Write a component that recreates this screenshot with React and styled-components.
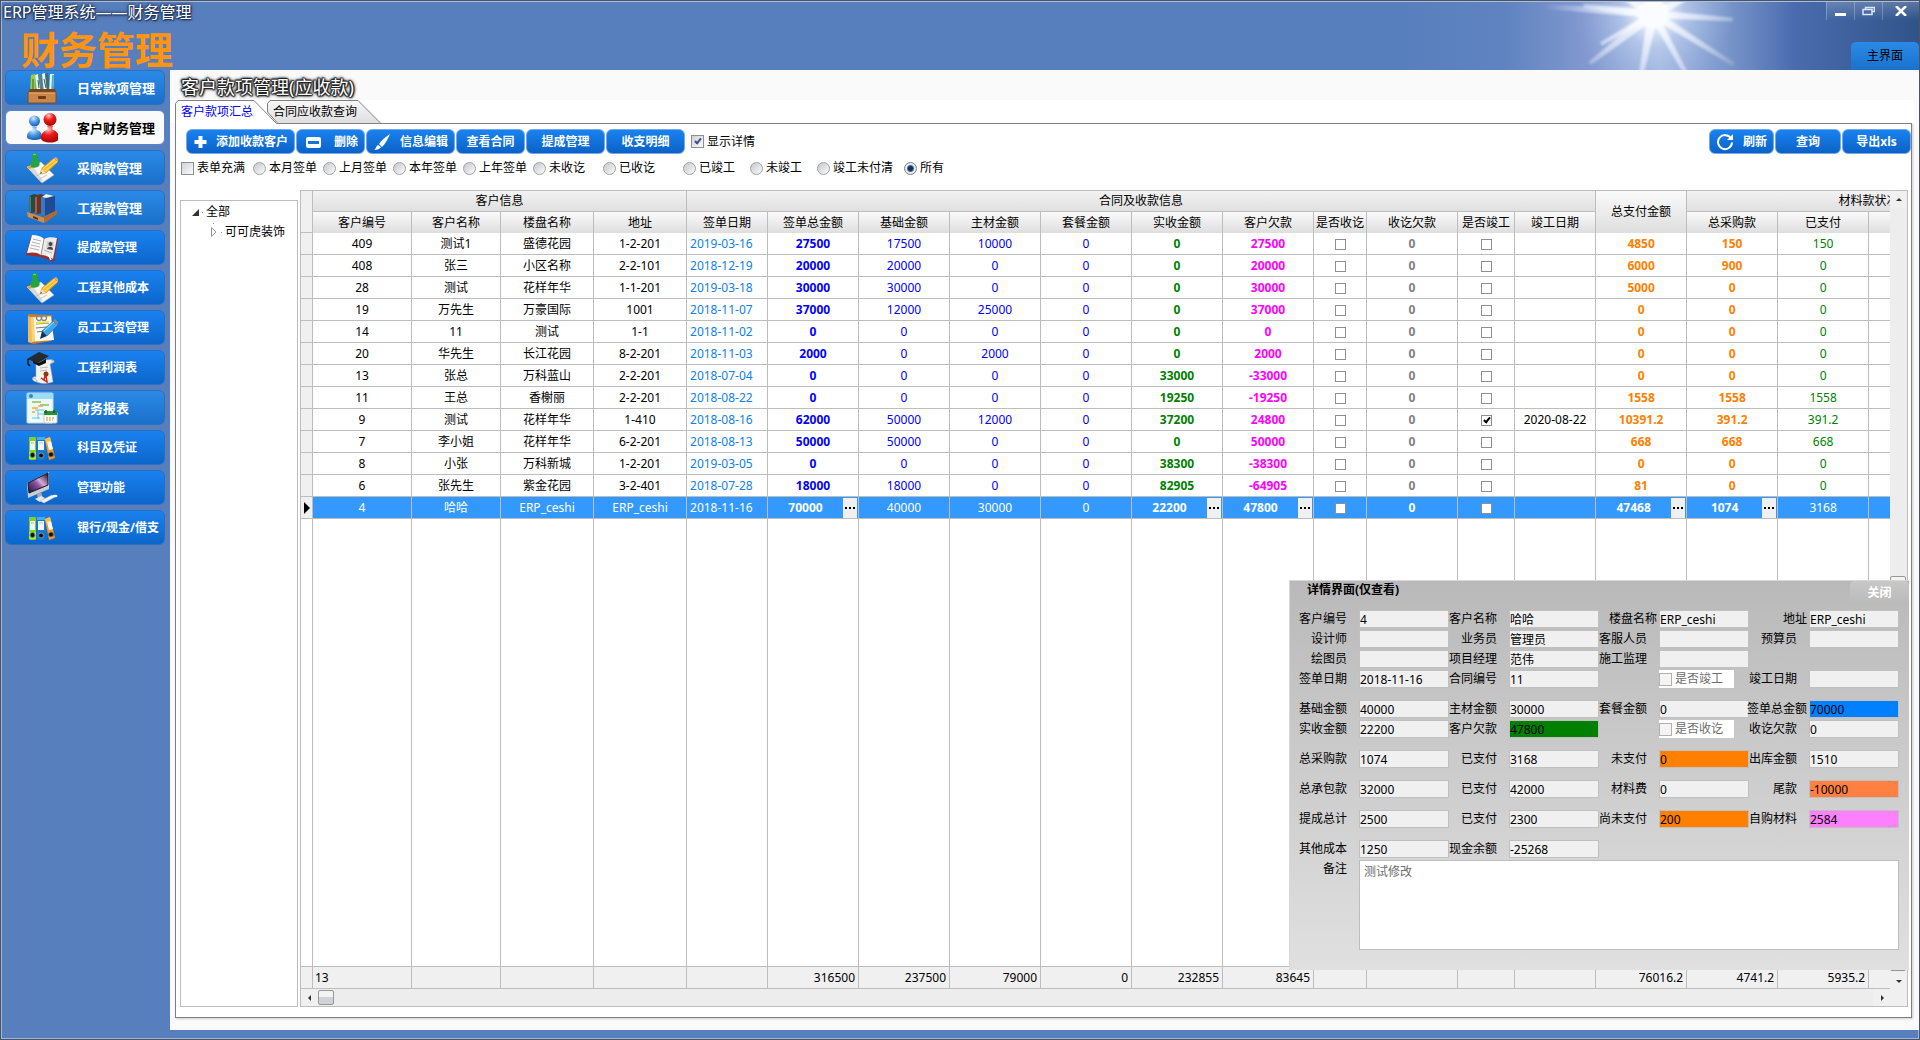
import React, { useState } from "react";
import styled, { createGlobalStyle, css } from "styled-components";

const FONT = `"Noto Sans", "Noto Sans CJK SC", sans-serif`;

const GlobalStyle = createGlobalStyle`
  *, *::before, *::after {
    box-sizing: border-box;
  }

  body {
    margin: 0;
    background: #587fbd;
    color: #000;
    font-family: ${FONT};
    font-size: 12px;
    line-height: 16px;
  }

  button, input, textarea {
    margin: 0;
    padding: 0;
    font: inherit;
    color: inherit;
  }
`;

/* ---------- window ---------- */

const Window = styled.div`
  display: flex;
  flex-direction: column;
  height: 100vh;
  min-height: 800px;
  padding-bottom: 9px;
  border: 1px solid #4c5361;
  background: #587fbd;
  box-shadow: inset 0 0 0 1px #9db5dc;
  overflow: hidden;
`;

const Header = styled.header`
  position: relative;
  display: flex;
  flex: none;
  justify-content: space-between;
  height: 69px;
  border-top: 1px solid #a9bfe2;
`;

const Sky = styled.svg`
  position: absolute;
  top: 0;
  right: 0;
  width: 518px;
  height: 68px;
`;

const Brand = styled.div`
  position: relative;
`;

const AppName = styled.div`
  padding-left: 2px;
  color: #fff;
  font-size: 16px;
  line-height: 20px;
  white-space: nowrap;
  text-shadow: 1px 1px 1px #1c2f52, -1px 0 1px #2b4270, 0 0 3px #1c2f52, 0 0 4px #1c2f52;
`;

const ModuleName = styled.h1`
  margin: 4px 0 0;
  padding-left: 20px;
  color: #ff9412;
  font-size: 38px;
  line-height: 46px;
  white-space: nowrap;
`;

const HeaderRight = styled.div`
  position: relative;
  display: flex;
  flex-direction: column;
  align-items: flex-end;
  justify-content: space-between;
`;

const WindowButtons = styled.div`
  display: flex;
`;

const WindowButton = styled.button`
  display: flex;
  align-items: center;
  justify-content: center;
  width: ${p => p.$width || 28}px;
  height: 18px;
  border: 0;
  border-left: 1px solid rgba(255, 255, 255, 0.25);
  background: linear-gradient(rgba(255, 255, 255, 0.2), rgba(255, 255, 255, 0));
  color: #fff;
`;

const HomeButton = styled.button`
  width: 68px;
  height: 28px;
  border: 0;
  border-radius: 5px 5px 0 0;
  background: linear-gradient(#2b8ae6, #1972cc);
  color: #000;
`;

const Body = styled.div`
  display: flex;
  flex: 1;
  min-height: 0;
`;

/* ---------- sidebar ---------- */

const Sidebar = styled.nav`
  display: flex;
  flex: none;
  flex-direction: column;
  gap: 5px;
  width: 169px;
  padding: 0 5px 0 4px;
`;

const SideButton = styled.button`
  display: flex;
  align-items: center;
  gap: 19px;
  height: 35px;
  padding-left: 20px;
  border: 1px solid #2f6dbd;
  border-radius: 6px;
  background: ${p => (p.$light ? "linear-gradient(#2b8ae8, #1970ca)" : "linear-gradient(#1982f0, #0b66ca)")};
  color: #fff;
  font-size: ${p => (p.$light ? 13 : 12)}px;
  font-weight: bold;
  white-space: nowrap;

  ${p =>
    p.$active &&
    css`
      border-color: #4f86cf;
      background: #fafafa;
      color: #000;
    `}

  svg {
    flex: none;
    width: 32px;
    height: 32px;
  }
`;

/* ---------- content ---------- */

const Content = styled.main`
  display: flex;
  flex: 1;
  flex-direction: column;
  min-width: 0;
  padding-bottom: 12px;
  background: #fafafa;
`;

const PageTitle = styled.h2`
  flex: none;
  margin: 0;
  padding: 4px 0 0 11px;
  height: 30px;
  color: #fff;
  font-size: 18px;
  font-weight: normal;
  line-height: 26px;
  text-shadow: 1px 0 1px #222, -1px 0 1px #222, 0 1px 1px #222, 0 -1px 1px #222, 1px 1px 2px #222,
    -1px -1px 2px #222, 0 0 3px #222, 0 0 4px #333;
`;

const TabStrip = styled.div`
  display: flex;
  flex: none;
  height: 23px;
  margin-right: 5px;
  padding-left: 5px;
  background: #fff;
`;

const Tab = styled.button`
  position: relative;
  z-index: ${p => (p.$active ? 2 : 1)};
  width: ${p => p.$width}px;
  height: 24px;
  margin-right: -10px;
  padding-left: 6px;
  border: 0;
  background: none;
  color: ${p => (p.$active ? "#0000ff" : "#000")};
  text-align: left;

  svg {
    position: absolute;
    inset: 0;
    z-index: -1;
  }
`;

const Pane = styled.section`
  display: flex;
  flex: 1;
  flex-direction: column;
  min-height: 0;
  margin: 0 7px 0 5px;
  padding-top: 5px;
  border: 1px solid #808080;
  background: #fff;
  box-shadow: 1px 1px 2px #ccc;
`;

const Toolbar = styled.div`
  display: flex;
  flex: none;
  align-items: center;
  justify-content: space-between;
  padding-left: 10px;
`;

const ToolGroup = styled.div`
  display: flex;
  align-items: center;
  gap: 1px;
`;

const ToolButton = styled.button`
  display: flex;
  align-items: center;
  justify-content: ${p => (p.$icon ? "space-between" : "center")};
  width: ${p => p.$width}px;
  height: 25px;
  padding: ${p => (p.$icon ? "0 6px" : "0")};
  border: 1px solid #73a9ea;
  border-radius: 6px;
  background: linear-gradient(#1982f0, #0b62c6);
  color: #fff;
  font-weight: bold;
  white-space: nowrap;
`;

const Check = styled.input.attrs({ type: "checkbox" })`
  appearance: none;
  position: relative;
  flex: none;
  width: ${p => (p.$small ? 11 : 13)}px;
  height: ${p => (p.$small ? 11 : 13)}px;
  border: 1px solid #8e8f8f;
  background: ${p => (p.$small ? "#fff" : "linear-gradient(135deg, #cfd2d6, #fbfbfb)")};
  vertical-align: middle;

  &:disabled {
    border-color: #b1b1b1;
    background: #f4f4f4;
  }

  &:checked::after {
    content: "";
    position: absolute;
    top: ${p => (p.$small ? 0 : 1)}px;
    left: ${p => (p.$small ? 3 : 4)}px;
    width: 4px;
    height: 7px;
    border: solid ${p => (p.$small ? "#000" : "#3b4f90")};
    border-width: 0 2px 2px 0;
    transform: rotate(40deg);
  }
`;

const Radio = styled.input.attrs({ type: "radio" })`
  appearance: none;
  flex: none;
  width: 13px;
  height: 13px;
  border: 1px solid #a0a1a1;
  border-radius: 50%;
  background: linear-gradient(135deg, #c4c7cb, #fbfbfb);

  &:checked {
    border-color: #7d8084;
    background: radial-gradient(circle, #14305c 0 2px, #3f6aa0 3px, #e8eaec 4px);
  }
`;

const Option = styled.label`
  display: flex;
  align-items: center;
  gap: 3px;
  width: ${p => (p.$width ? p.$width + "px" : "auto")};
  white-space: nowrap;
`;

const DetailToggle = styled(Option)`
  padding-left: 5px;
`;

const Filters = styled.div`
  display: flex;
  flex: none;
  align-items: center;
  height: 28px;
  padding-left: 5px;
`;

const Workspace = styled.div`
  display: flex;
  flex: 1;
  gap: 2px;
  min-height: 0;
  padding: 8px 3px 10px 4px;
`;

/* ---------- tree ---------- */

const Tree = styled.ul`
  flex: none;
  width: 118px;
  margin: 10px 0 0;
  padding: 1px 0 0;
  border: 1px solid #bdbdbd;
  list-style: none;
`;

const TreeItem = styled.li`
  display: flex;
  align-items: center;
  gap: 3px;
  height: 20px;
  padding-left: ${p => (p.$level ? 30 : 11)}px;

  svg {
    flex: none;
  }
`;

/* ---------- grid ---------- */

const GridFrame = styled.div`
  position: relative;
  display: grid;
  flex: 1;
  grid-template-columns: minmax(0, 1fr) 17px;
  grid-template-rows: minmax(0, 1fr) 17px;
  min-width: 0;
  border: 1px solid #bdbdbd;
`;

const GridView = styled.div`
  min-height: 0;
  overflow: hidden;
`;

const Table = styled.table`
  width: 1648px;
  height: 100%;
  border-spacing: 0;
  table-layout: fixed;
`;

const Th = styled.th`
  height: 21px;
  padding: 0;
  border-right: 1px solid #bdbdbd;
  border-bottom: ${p => (p.$group ? "1px solid #bdbdbd" : "0")};
  background: ${p => (p.$group ? "linear-gradient(#f2f2f2, #e0e0e0)" : "linear-gradient(#fafafa, #dedede)")};
  font-weight: normal;
  white-space: nowrap;
`;

const MaterialTitle = styled.span`
  padding-left: 91px;
`;

const Td = styled.td`
  height: 22px;
  padding: ${p => (p.$align === "left" ? "0 0 0 3px" : "0")};
  border-right: 1px solid #bdbdbd;
  border-bottom: 1px solid #bdbdbd;
  color: ${p => (p.$selected ? "#fff" : p.$color || "#000")};
  background: ${p => (p.$selected ? "#3399ff" : "#fff")};
  font-weight: ${p => (p.$bold ? "bold" : "normal")};
  line-height: 16px;
  text-align: ${p => p.$align || "center"};
  white-space: nowrap;
`;

const Marker = styled.td`
  height: ${p => (p.$head ? 42 : 22)}px;
  padding: 0 0 0 2px;
  border-right: 1px solid #bdbdbd;
  border-bottom: 1px solid #bdbdbd;
  background: #f0f0f0;
  line-height: 0;
`;

const FillerCell = styled.td`
  padding: 0;
  border-right: 1px solid #bdbdbd;
  border-bottom: 1px solid #bdbdbd;
`;

const SumCell = styled.td`
  height: 22px;
  padding: 0 3px 0 2px;
  border-right: 1px solid #bdbdbd;
  border-bottom: 1px solid #bdbdbd;
  background: #f0f0f0;
  text-align: ${p => (p.$left ? "left" : "right")};
`;

const WithMore = styled.div`
  display: flex;
  align-items: center;

  span {
    flex: 1;
  }
`;

const MoreButton = styled.button`
  display: flex;
  align-items: center;
  justify-content: center;
  width: 14px;
  height: 20px;
  margin-right: 1px;
  border: 0;
  background: #f0f0f0;
`;

const VScroll = styled.div`
  display: flex;
  flex-direction: column;
  background: #ededed;
`;

const HScroll = styled.div`
  display: flex;
  background: #ededed;
`;

const ScrollArrow = styled.button`
  display: flex;
  flex: none;
  align-items: center;
  justify-content: center;
  width: 17px;
  height: 17px;
  border: 0;
  background: #f0f0f0;
`;

const Gap = styled.div`
  flex: ${p => p.$grow};
`;

const Thumb = styled.div`
  flex: ${p => p.$grow || "none"};
  width: 16px;
  min-height: 15px;
  margin: 1px 0;
  border: 1px solid #979797;
  border-radius: 2px;
  background: linear-gradient(#f4f4f4 50%, #d0d2d4 50%);
`;

const Corner = styled.div`
  background: #f0f0f0;
`;

/* ---------- detail panel ---------- */

const Detail = styled.aside`
  position: absolute;
  right: -2px;
  bottom: 36px;
  width: 620px;
  height: 390px;
  border-top: 1px solid #d8d8d8;
  border-left: 1px solid #d8d8d8;
  background: linear-gradient(#b9b9b9, #e0e0e0);
`;

const DetailHead = styled.div`
  display: flex;
  justify-content: space-between;
  height: 29px;
  padding-left: 17px;
  font-weight: bold;
  line-height: 18px;
`;

const CloseButton = styled.button`
  width: 59px;
  height: 24px;
  border: 0;
  border-radius: 5px;
  background: linear-gradient(#c8c8c8, #bababa);
  color: #fff;
  font-weight: bold;
`;

const FieldGroup = styled.div`
  margin-bottom: ${p => (p.$last ? 0 : 10)}px;
  padding-left: 9px;
`;

const FieldRow = styled.div`
  display: grid;
  grid-template-columns: repeat(4, 60px 90px);
  height: 20px;
`;

const FieldLabel = styled.label`
  display: flex;
  justify-content: flex-end;
  padding-right: ${p => (p.$tight ? 2 : 12)}px;
  line-height: 18px;
  white-space: nowrap;
`;

const FieldInput = styled.input`
  width: 90px;
  height: 18px;
  padding: 0;
  border: 1px solid #c0c0c0;
  background: ${p => p.$fill || "#f0f0f0"};
`;

const FieldCheck = styled.label`
  display: flex;
  grid-column: span 2;
  align-items: center;
  gap: 3px;
  width: 75px;
  height: 18px;
  margin-left: 60px;
  background: #fff;
  color: #6d6d6d;
`;

const MemoRow = styled.div`
  display: grid;
  grid-template-columns: 60px 540px;
  padding-left: 9px;
`;

const Memo = styled.textarea`
  height: 90px;
  padding: 3px 4px;
  border: 1px solid #bdbdbd;
  background: #fff;
  color: #6d6d6d;
  resize: none;
`;

/* ---------- sidebar icons ---------- */

const FilesIcon = () => (
  <svg viewBox="0 0 32 32">
    <path d="M5 3l4-1 1 19H4z" fill="#9fd12e" />
    <path d="M9 3l3-1 3 19h-4z" fill="#e9f3f2" />
    <path d="M12 3l3-1 4 19h-4z" fill="#4f8784" />
    <path d="M16 2l3-1 3 20h-4z" fill="#f1f5f5" />
    <path d="M19 2l3-1 3 20h-4z" fill="#376e78" />
    <path d="M24 2h4l-1 19h-4z" fill="#eaf6f8" />
    <path d="M26 3h2l-1 18h-2z" fill="#49b5c8" />
    <path d="M7 7v10M12 8l1 8M18 7l2 9" stroke="#3d5556" strokeWidth="1" />
    <path d="M4 17h25l1 4H2z" fill="#7a4216" />
    <rect x="2" y="20" width="28" height="11" rx="1" fill="#c9874c" stroke="#824b1e" />
    <rect x="12" y="24" width="8" height="3" rx="1" fill="#70390f" />
    <path d="M3 21h26" stroke="#e9b47f" />
  </svg>
);

const UsersIcon = () => (
  <svg viewBox="0 0 32 32">
    <defs>
      <radialGradient id="ublue" cx="0.4" cy="0.25" r="0.8">
        <stop offset="0" stopColor="#d8ecff" />
        <stop offset="0.5" stopColor="#4b98e8" />
        <stop offset="1" stopColor="#1557ac" />
      </radialGradient>
      <radialGradient id="ured" cx="0.4" cy="0.2" r="0.8">
        <stop offset="0" stopColor="#ffc8c0" />
        <stop offset="0.45" stopColor="#ee1c1c" />
        <stop offset="1" stopColor="#a80505" />
      </radialGradient>
    </defs>
    <path d="M1 25c0-4 2-6 5-7 1-1 1-2 0-3h5c-1 1-1 2 0 3 3 1 5 3 5 7 0 4-15 4-15 0z" fill="url(#ublue)" />
    <circle cx="8.500" cy="9" r="5.500" fill="url(#ublue)" />
    <path d="M15 26c0-5 3-7 6-8 1-1 1-3 0-4h6c-1 1-1 3 0 4 3 1 6 3 6 8 0 6-18 6-18 0z" fill="url(#ured)" />
    <circle cx="24" cy="7.500" r="6.500" fill="url(#ured)" />
  </svg>
);

const NotesIcon = () => (
  <svg viewBox="0 0 32 32">
    <path d="M1 15l14-5 13 13-12 8z" fill="#f6f6f4" stroke="#b5b5b0" strokeWidth="0.6" />
    <path d="M1 15l5-2 11 16-2 1z" fill="#d9dad4" />
    <path d="M1 15l11-4 2 2-11 4z" fill="#f1a01e" />
    <path d="M5 15c-1-4 0-6 2-7-2-3-1-7 2-7s4 4 2 7c3 1 3 3 2 6-2 2-6 2-8 1z" fill="#25a53d" />
    <path d="M7 3c1-1 2-1 3 0" stroke="#8ae080" fill="none" />
    <path d="M14 22l2-6L28 6l4 4-12 11z" fill="#fbbd21" stroke="#c37a08" strokeWidth="0.5" />
    <path d="M17 17L29 7M19 19L31 9" stroke="#ffe58a" />
    <path d="M28 6l2-1 3 3-1 2z" fill="#e8a08c" />
    <path d="M14 22l2-5 4 4z" fill="#f7dfb4" />
    <path d="M14 22l1-2 1 1z" fill="#222" />
    <path d="M9 25l5-3M12 28l9-5" stroke="#aaa" strokeWidth="0.6" />
  </svg>
);

const BooksIcon = () => (
  <svg viewBox="0 0 32 32">
    <path d="M3 4l5-2 4 1v16l-8 3z" fill="#28493f" />
    <path d="M3 4l2 1v15l-1 1z" fill="#4e7d68" />
    <path d="M9 4l5-2 4 1v18l-8 1z" fill="#6b3128" />
    <path d="M9 5h2v16H9z" fill="#a2604a" />
    <path d="M16 5l4-3 9 2v18l-10 4z" fill="#1d4b95" />
    <path d="M15 5l4 1v18l-4-2z" fill="#3b78c2" />
    <path d="M20 2l8 2-8 2-4-1z" fill="#f3f0e4" />
    <path d="M1 20l16 5 14-7v4L19 31 2 25z" fill="#ad6a37" />
    <path d="M1 20l17 6v5L2 25z" fill="#cd8d55" />
    <path d="M7 24l5 2v2l-5-2z" fill="#5a2c0c" />
  </svg>
);

const AddressIcon = () => (
  <svg viewBox="0 0 32 32">
    <path d="M0 23L5 4l13 4 14-2-4 24-13-5z" fill="#a22b2a" />
    <path d="M1 21L6 3c5 0 9 1 12 4l-3 16C11 20 6 20 1 21z" fill="#fbfbfa" />
    <path d="M18 7c4-2 8-2 13-1l-4 21c-4-2-8-4-12-4z" fill="#ececea" />
    <path d="M18 7l-3 16" stroke="#999" />
    <path d="M7 7l8 2M6 10l8 2M5 13l9 2M4 16l9 2M18 18l8 3" stroke="#9d9d9d" strokeWidth="0.8" />
    <path d="M21 9l7 1-1 8-7-1z" fill="#cfd2d6" />
    <circle cx="24.500" cy="12" r="2" fill="#444" />
    <path d="M21 17c1-3 6-3 6 1z" fill="#444" />
    <path d="M22 22l3 6" stroke="#fff" strokeWidth="1.500" />
  </svg>
);

const ClipboardIcon = () => (
  <svg viewBox="0 0 32 32">
    <path d="M2 2l24 1v26L7 32l-5-2z" fill="#c9792d" />
    <path d="M2 4l4 2v25l-4-1z" fill="#f5b95e" />
    <path d="M5 5l20-1 1 24-20 2z" fill="#f7d66b" />
    <path d="M8 6l17-1 3 23-19 1z" fill="#fafaf8" />
    <circle cx="13" cy="6" r="2.500" fill="none" stroke="#858585" strokeWidth="1.300" />
    <circle cx="18" cy="6" r="2.500" fill="none" stroke="#858585" strokeWidth="1.300" />
    <path d="M10 12l13-1M10 16l11-1M11 20l8-1" stroke="#777" />
    <path d="M10 11l13-1" stroke="#efe43a" strokeWidth="2" />
    <path d="M16 19L27 9l5 4-11 11z" fill="#3da7ed" stroke="#1e5f9b" strokeWidth="0.500" />
    <path d="M27 9l2-2 4 4-1 2z" fill="#868b91" />
    <path d="M14 27l2-8 5 5z" fill="#15354f" />
    <path d="M18 19l10-9" stroke="#a9e0ff" />
  </svg>
);

const DiplomaIcon = () => (
  <svg viewBox="0 0 32 32">
    <path d="M10 12c5-4 13-5 17-4 2 1 1 3-1 3l-2 1 3 18c-7 2-13 2-19-1-3-2-1-5 2-4z" fill="#f2f2ef" stroke="#b5b5b2" strokeWidth="0.500" />
    <path d="M25 8c3 0 3 3 0 3M6 27c2-1 5 0 5 3" stroke="#aaa" fill="none" />
    <path d="M7 8l5 3 8-4v4l-7 3-6-3z" fill="#111" />
    <path d="M1 7L13 0l10 4-11 7z" fill="#26292d" />
    <path d="M2 7v5l2 2" stroke="#15181b" fill="none" strokeWidth="1.500" />
    <path d="M14 16l8-1M14 19l7-1" stroke="#bbb" />
    <circle cx="20" cy="22" r="2.500" fill="#8f3b12" />
    <path d="M19 24l-1 4-3-2M20 24l1 6-3-2" stroke="#cf2018" strokeWidth="1.500" fill="none" />
  </svg>
);

const ReportIcon = () => (
  <svg viewBox="0 0 32 32">
    <rect x="1" y="1" width="26" height="30" rx="1" fill="#eef9f7" stroke="#c3dbe0" />
    <rect x="1" y="1" width="26" height="6" fill="#9cdcf5" />
    <circle cx="5" cy="4" r="2" fill="#2f8db0" />
    <path d="M6 10h9M14 13h9" stroke="#8fbd59" strokeWidth="1.500" />
    <path d="M6 16h6M12 14h5M6 20h3" stroke="#f5aa35" strokeWidth="1.500" />
    <path d="M9 18h9M12 22h6M6 26h8M12 18v9" stroke="#62c7e5" />
    <rect x="18" y="20" width="13" height="11" rx="1" fill="#fff" stroke="#c5cbc2" />
    <rect x="18" y="19" width="13" height="4" fill="#259234" />
    <path d="M20 18v3M28 18v3" stroke="#12581d" strokeWidth="1.500" />
    <path d="M20 26h8M20 28h7" stroke="#d7b66b" strokeWidth="1.300" strokeDasharray="2 1" />
  </svg>
);

const BindersIcon = () => (
  <svg viewBox="0 0 32 32">
    <rect x="3" y="5" width="7" height="23" rx="1" fill="#7ed321" />
    <path d="M3 20h7v7H3z" fill="#a7ea48" />
    <rect x="11" y="5" width="8" height="23" rx="1" fill="#1878cd" />
    <path d="M11 5h8v3h-8z" fill="#49a9ee" />
    <path d="M19 7l5-2 5 21-6 2z" fill="#ff981a" />
    <path d="M19 7l5-2 1 4-5 2z" fill="#ffc33f" />
    <path d="M4 9h5v9H4zM12 9h6v9h-6zM21 10l4-1 2 8-4 1z" fill="#f5f8fa" />
    <path d="M5 11h3M13 11h4" stroke="#aac2d0" />
    <circle cx="6.500" cy="23" r="2.500" fill="#111" stroke="#6d8c70" />
    <circle cx="15" cy="23.500" r="2.500" fill="#111" stroke="#7990a9" />
    <circle cx="25" cy="22.500" r="2.500" fill="#111" stroke="#9d7446" />
  </svg>
);

const MonitorIcon = () => (
  <svg viewBox="0 0 32 32">
    <defs>
      <linearGradient id="screen" x1="0" y1="1" x2="1" y2="0">
        <stop offset="0" stopColor="#17102e" />
        <stop offset="0.45" stopColor="#8956a8" />
        <stop offset="0.6" stopColor="#d7abd4" />
        <stop offset="1" stopColor="#170b2b" />
      </linearGradient>
    </defs>
    <path d="M1 11L23 0v17L2 26z" fill="#c9ccd0" />
    <path d="M2 11L22 1v12L3 21z" fill="url(#screen)" stroke="#15151b" />
    <path d="M11 22l4-2 2 6-5 2z" fill="#a5a9af" />
    <path d="M9 27l6-3 4 2-5 4z" fill="#e4e6e8" />
    <path d="M14 29l12-6 3 2-11 6z" fill="#f2f3f4" stroke="#b3b6ba" strokeWidth="0.500" />
    <ellipse cx="29" cy="24" rx="2.500" ry="1.300" fill="#f2f3f4" />
  </svg>
);

/* ---------- toolbar and window glyphs ---------- */

const PlusIcon = () => (
  <svg width="14" height="14" viewBox="0 0 14 14">
    <path d="M5.500 1h4v4h4v4h-4v4h-4V9h-4V5h4z" fill="#fff" />
  </svg>
);

const MinusIcon = () => (
  <svg width="20" height="14" viewBox="0 0 20 14">
    <rect x="3" y="2" width="15" height="11" rx="2" fill="#fff" />
    <path d="M5 7.500h11" stroke="#1673dc" strokeWidth="3" />
  </svg>
);

const BrushIcon = () => (
  <svg width="18" height="18" viewBox="0 0 18 18">
    <path d="M17 1C12 4 8 8 6 11l3 3c3-3 6-8 8-13z" fill="#fff" />
    <path d="M5 12l3 2c-1 2-4 3-7 3 2-1 2-4 4-5z" fill="#fff" />
  </svg>
);

const RefreshIcon = () => (
  <svg width="18" height="18" viewBox="0 0 18 18">
    <path d="M15 5.500A7 7 0 1 0 16 9.500" fill="none" stroke="#fff" strokeWidth="2" />
    <path d="M17 1v6h-6z" fill="#fff" />
  </svg>
);

const Arrow = ({ dir }) => {
  const points = { up: "1,5 4,2 7,5", down: "1,3 4,6 7,3", left: "5,1 2,4 5,7", right: "3,1 6,4 3,7" };
  return (
    <svg width="8" height="8" viewBox="0 0 8 8">
      <polygon points={points[dir]} fill="#333" />
    </svg>
  );
};

/* ---------- data ---------- */

const MENU = [
  { text: "日常款项管理", icon: FilesIcon, light: true },
  { text: "客户财务管理", icon: UsersIcon, light: true },
  { text: "采购款管理", icon: NotesIcon, light: true },
  { text: "工程款管理", icon: BooksIcon, light: true },
  { text: "提成款管理", icon: AddressIcon },
  { text: "工程其他成本", icon: NotesIcon },
  { text: "员工工资管理", icon: ClipboardIcon },
  { text: "工程利润表", icon: DiplomaIcon },
  { text: "财务报表", icon: ReportIcon, light: true },
  { text: "科目及凭证", icon: BindersIcon },
  { text: "管理功能", icon: MonitorIcon },
  { text: "银行/现金/借支", icon: BindersIcon }
];

const TOOLS = [
  { text: "添加收款客户", icon: PlusIcon, width: 109 },
  { text: "删除", icon: MinusIcon, width: 69 },
  { text: "信息编辑", icon: BrushIcon, width: 89 },
  { text: "查看合同", width: 69 },
  { text: "提成管理", width: 79 },
  { text: "收支明细", width: 79 }
];

const RANGES = [
  { text: "本月签单", width: 70 },
  { text: "上月签单", width: 70 },
  { text: "本年签单", width: 70 },
  { text: "上年签单", width: 70 },
  { text: "未收讫", width: 70 },
  { text: "已收讫", width: 80 },
  { text: "已竣工", width: 67 },
  { text: "未竣工", width: 67 },
  { text: "竣工未付清", width: 87 },
  { text: "所有" }
];

const BLUE = "#0000ff";
const GREEN = "#008000";
const ORANGE = "#ff8000";

const COLUMNS = [
  { title: "客户编号", width: 99, sum: "13" },
  { title: "客户名称", width: 89 },
  { title: "楼盘名称", width: 93 },
  { title: "地址", width: 93 },
  { title: "签单日期", width: 81, color: "#1080ee", align: "left" },
  { title: "签单总金额", width: 91, color: BLUE, bold: true, more: true, sum: "316500" },
  { title: "基础金额", width: 91, color: BLUE, sum: "237500" },
  { title: "主材金额", width: 91, color: BLUE, sum: "79000" },
  { title: "套餐金额", width: 91, color: BLUE, sum: "0" },
  { title: "实收金额", width: 91, color: GREEN, bold: true, more: true, sum: "232855" },
  { title: "客户欠款", width: 91, color: "#ff00ff", bold: true, more: true, sum: "83645" },
  { title: "是否收讫", width: 53, check: true },
  { title: "收讫欠款", width: 91, color: "#808080", bold: true },
  { title: "是否竣工", width: 57, check: true },
  { title: "竣工日期", width: 81 },
  { title: "总支付金额", width: 91, color: ORANGE, bold: true, more: true, sum: "76016.2" },
  { title: "总采购款", width: 91, color: ORANGE, bold: true, more: true, sum: "4741.2" },
  { title: "已支付", width: 91, color: GREEN, sum: "5935.2" },
  { title: "", width: 91 }
];

const ROWS = [
  ["409", "测试1", "盛德花园", "1-2-201", "2019-03-16", "27500", "17500", "10000", "0", "0", "27500", false, "0", false, "", "4850", "150", "150"],
  ["408", "张三", "小区名称", "2-2-101", "2018-12-19", "20000", "20000", "0", "0", "0", "20000", false, "0", false, "", "6000", "900", "0"],
  ["28", "测试", "花样年华", "1-1-201", "2019-03-18", "30000", "30000", "0", "0", "0", "30000", false, "0", false, "", "5000", "0", "0"],
  ["19", "万先生", "万豪国际", "1001", "2018-11-07", "37000", "12000", "25000", "0", "0", "37000", false, "0", false, "", "0", "0", "0"],
  ["14", "11", "测试", "1-1", "2018-11-02", "0", "0", "0", "0", "0", "0", false, "0", false, "", "0", "0", "0"],
  ["20", "华先生", "长江花园", "8-2-201", "2018-11-03", "2000", "0", "2000", "0", "0", "2000", false, "0", false, "", "0", "0", "0"],
  ["13", "张总", "万科蓝山", "2-2-201", "2018-07-04", "0", "0", "0", "0", "33000", "-33000", false, "0", false, "", "0", "0", "0"],
  ["11", "王总", "香榭丽", "2-2-201", "2018-08-22", "0", "0", "0", "0", "19250", "-19250", false, "0", false, "", "1558", "1558", "1558"],
  ["9", "测试", "花样年华", "1-410", "2018-08-16", "62000", "50000", "12000", "0", "37200", "24800", false, "0", true, "2020-08-22", "10391.2", "391.2", "391.2"],
  ["7", "李小姐", "花样年华", "6-2-201", "2018-08-13", "50000", "50000", "0", "0", "0", "50000", false, "0", false, "", "668", "668", "668"],
  ["8", "小张", "万科新城", "1-2-201", "2019-03-05", "0", "0", "0", "0", "38300", "-38300", false, "0", false, "", "0", "0", "0"],
  ["6", "张先生", "紫金花园", "3-2-401", "2018-07-28", "18000", "18000", "0", "0", "82905", "-64905", false, "0", false, "", "81", "0", "0"],
  ["4", "哈哈", "ERP_ceshi", "ERP_ceshi", "2018-11-16", "70000", "40000", "30000", "0", "22200", "47800", false, "0", false, "", "47468", "1074", "3168"]
];

const DETAIL_GROUPS = [
  [
    [{ label: "客户编号", value: "4" }, { label: "客户名称", value: "哈哈" }, { label: "楼盘名称", value: "ERP_ceshi", tight: true }, { label: "地址", value: "ERP_ceshi", tight: true }],
    [{ label: "设计师", value: "" }, { label: "业务员", value: "管理员" }, { label: "客服人员", value: "" }, { label: "预算员", value: "" }],
    [{ label: "绘图员", value: "" }, { label: "项目经理", value: "范伟" }, { label: "施工监理", value: "" }],
    [{ label: "签单日期", value: "2018-11-16" }, { label: "合同编号", value: "11" }, { check: "是否竣工" }, { label: "竣工日期", value: "" }]
  ],
  [
    [{ label: "基础金额", value: "40000" }, { label: "主材金额", value: "30000" }, { label: "套餐金额", value: "0" }, { label: "签单总金额", value: "70000", fill: "#0080ff", tight: true }],
    [{ label: "实收金额", value: "22200" }, { label: "客户欠款", value: "47800", fill: "#008000" }, { check: "是否收讫" }, { label: "收讫欠款", value: "0" }]
  ],
  [
    [{ label: "总采购款", value: "1074" }, { label: "已支付", value: "3168" }, { label: "未支付", value: "0", fill: "#ff8000" }, { label: "出库金额", value: "1510" }]
  ],
  [
    [{ label: "总承包款", value: "32000" }, { label: "已支付", value: "42000" }, { label: "材料费", value: "0" }, { label: "尾款", value: "-10000", fill: "#ff8040" }]
  ],
  [
    [{ label: "提成总计", value: "2500" }, { label: "已支付", value: "2300" }, { label: "尚未支付", value: "200", fill: "#ff8000" }, { label: "自购材料", value: "2584", fill: "#ff80ff" }]
  ],
  [
    [{ label: "其他成本", value: "1250" }, { label: "现金余额", value: "-25268" }]
  ]
];

/* ---------- parts ---------- */

// angle, length, half width at the sun
const RAYS = [
  [-176, 130, 4], [-25, 40, 5], [4, 80, 4], [32, 95, 4], [61, 76, 4],
  [101, 72, 5], [142, 80, 5], [150, 60, 3], [187, 70, 4], [-150, 40, 5]
];

const SunSky = () => (
  <Sky viewBox="0 0 518 68" preserveAspectRatio="none" aria-hidden="true">
    <defs>
      <linearGradient id="sky">
        <stop offset="0" stopColor="#587fbd" />
        <stop offset="0.2" stopColor="#5f83c0" />
        <stop offset="0.36" stopColor="#8299d0" />
        <stop offset="0.5" stopColor="#a3b8e2" />
        <stop offset="0.62" stopColor="#7d99cc" />
        <stop offset="0.76" stopColor="#4a6cae" />
        <stop offset="1" stopColor="#305489" />
      </linearGradient>
      <radialGradient id="glow">
        <stop offset="0" stopColor="#fff" />
        <stop offset="0.15" stopColor="#f4f8ff" stopOpacity="0.9" />
        <stop offset="0.4" stopColor="#ccdcf6" stopOpacity="0.5" />
        <stop offset="1" stopColor="#a0b6e0" stopOpacity="0" />
      </radialGradient>
      <radialGradient id="ray" gradientUnits="userSpaceOnUse" cx="0" cy="0" r="110">
        <stop offset="0" stopColor="#fff" />
        <stop offset="0.3" stopColor="#f4f8ff" stopOpacity="0.75" />
        <stop offset="1" stopColor="#fff" stopOpacity="0" />
      </radialGradient>
      <filter id="soft">
        <feGaussianBlur stdDeviation="1" />
      </filter>
    </defs>
    <rect width="518" height="68" fill="url(#sky)" />
    <circle cx="252" cy="12" r="80" fill="url(#glow)" />
    <g filter="url(#soft)">
      {RAYS.map(([angle, length, w]) => (
        <polygon
          key={angle}
          points={`0,${-w} ${length},-2 ${length},2 0,${w}`}
          fill="url(#ray)"
          transform={`translate(252 12) rotate(${angle})`}
        />
      ))}
      <circle cx="252" cy="12" r="15" fill="#fafcff" />
    </g>
  </Sky>
);

const DetailField = ({ id, field }) => {
  if (field.check) {
    return (
      <FieldCheck>
        <Check disabled />
        {field.check}
      </FieldCheck>
    );
  }
  return (
    <>
      <FieldLabel htmlFor={id} $tight={field.tight}>
        {field.label}
      </FieldLabel>
      <FieldInput id={id} readOnly value={field.value} $fill={field.fill} />
    </>
  );
};

const DetailPanel = ({ onClose }) => (
  <Detail>
    <DetailHead>
      详情界面(仅查看)
      <CloseButton onClick={onClose}>关闭</CloseButton>
    </DetailHead>
    {DETAIL_GROUPS.map((rows, g) => (
      <FieldGroup key={g} $last={g === DETAIL_GROUPS.length - 1}>
        {rows.map((fields, r) => (
          <FieldRow key={r}>
            {fields.map((field, f) => (
              <DetailField key={f} id={`field-${g}-${r}-${f}`} field={field} />
            ))}
          </FieldRow>
        ))}
      </FieldGroup>
    ))}
    <MemoRow>
      <FieldLabel htmlFor="memo">备注</FieldLabel>
      <Memo id="memo" readOnly value="测试修改" />
    </MemoRow>
  </Detail>
);

const GridCell = ({ column, value, selected }) => {
  let content = value;
  if (column.check) {
    content = <Check $small defaultChecked={value} aria-label={column.title} />;
  } else if (selected && column.more) {
    content = (
      <WithMore>
        <span>{value}</span>
        <MoreButton aria-label={column.title}>
          <svg width="10" height="2" viewBox="0 0 10 2">
            <path d="M0 0h2v2H0zM4 0h2v2H4zM8 0h2v2H8z" />
          </svg>
        </MoreButton>
      </WithMore>
    );
  }
  return (
    <Td $color={column.color} $bold={column.bold} $align={column.align} $selected={selected}>
      {content}
    </Td>
  );
};

const CustomerTable = ({ selectedId, onSelect }) => (
  <Table>
    <colgroup>
      <col style={{ width: 12 }} />
      {COLUMNS.map((column, i) => (
        <col key={i} style={{ width: column.width }} />
      ))}
    </colgroup>
    <thead>
      <tr>
        <Marker rowSpan={2} $head />
        <Th colSpan={4} $group>客户信息</Th>
        <Th colSpan={11} $group>合同及收款信息</Th>
        <Th rowSpan={2}>总支付金额</Th>
        <Th colSpan={3} $group>
          <MaterialTitle>材料款状况</MaterialTitle>
        </Th>
      </tr>
      <tr>
        {COLUMNS.filter(column => column.title !== "总支付金额").map((column, i) => (
          <Th key={i}>{column.title}</Th>
        ))}
      </tr>
    </thead>
    <tbody>
      {ROWS.map(row => {
        const selected = row[0] === selectedId;
        return (
          <tr key={row[0]} onClick={() => onSelect(row[0])}>
            <Marker>
              {selected && (
                <svg width="7" height="12" viewBox="0 0 7 12">
                  <path d="M1 0l6 6-6 6z" />
                </svg>
              )}
            </Marker>
            {COLUMNS.map((column, i) => (
              <GridCell key={i} column={column} value={row[i]} selected={selected} />
            ))}
          </tr>
        );
      })}
      <tr>
        <FillerCell />
        {COLUMNS.map((column, i) => (
          <FillerCell key={i} />
        ))}
      </tr>
    </tbody>
    <tfoot>
      <tr>
        <Marker />
        {COLUMNS.map((column, i) => (
          <SumCell key={i} $left={i === 0}>
            {column.sum}
          </SumCell>
        ))}
      </tr>
    </tfoot>
  </Table>
);

const App = () => {
  const [range, setRange] = useState("所有");
  const [showDetail, setShowDetail] = useState(true);
  const [selectedId, setSelectedId] = useState("4");

  return (
    <>
      <GlobalStyle />
      <Window>
        <Header>
          <SunSky />
          <Brand>
            <AppName>ERP管理系统——财务管理</AppName>
            <ModuleName>财务管理</ModuleName>
          </Brand>
          <HeaderRight>
            <WindowButtons>
              <WindowButton aria-label="最小化">
                <svg width="12" height="12" viewBox="0 0 12 12">
                  <path d="M0 8h11v3H0z" fill="#fff" />
                </svg>
              </WindowButton>
              <WindowButton aria-label="还原">
                <svg width="13" height="10" viewBox="0 0 13 10">
                  <path d="M3.500 3V1.500h9v4H10M1 3.500h9v5H1z" fill="none" stroke="#dbe5f5" strokeWidth="1.500" />
                </svg>
              </WindowButton>
              <WindowButton aria-label="关闭窗口" $width={37}>
                <svg width="12" height="10" viewBox="0 0 12 10">
                  <path d="M1 0l10 10M11 0L1 10" stroke="#fff" strokeWidth="2.500" />
                </svg>
              </WindowButton>
            </WindowButtons>
            <HomeButton>主界面</HomeButton>
          </HeaderRight>
        </Header>

        <Body>
          <Sidebar>
            {MENU.map(({ text, icon: Icon, light }) => (
              <SideButton key={text} $light={light} $active={text === "客户财务管理"}>
                <Icon />
                {text}
              </SideButton>
            ))}
          </Sidebar>

          <Content>
            <PageTitle>客户款项管理(应收款)</PageTitle>
            <TabStrip>
              <Tab $active $width={102}>
                <svg width="102" height="24" viewBox="0 0 102 24">
                  <path d="M0.500 24V3.500L3 0.500H79L101.500 23.500V24z" fill="#fff" />
                  <path d="M0.500 24V3.500L3 0.500H79L101.500 23.500" fill="none" stroke="#808080" />
                </svg>
                客户款项汇总
              </Tab>
              <Tab $width={115}>
                <svg width="115" height="24" viewBox="0 0 115 24">
                  <defs>
                    <linearGradient id="tab" x1="0" y1="0" x2="0" y2="1">
                      <stop offset="0" stopColor="#f8f8f8" />
                      <stop offset="1" stopColor="#dedede" />
                    </linearGradient>
                  </defs>
                  <path d="M0.500 12V3.500L3 0.500H91L114 23.500H11z" fill="url(#tab)" stroke="#808080" />
                </svg>
                合同应收款查询
              </Tab>
            </TabStrip>

            <Pane>
              <Toolbar>
                <ToolGroup>
                  {TOOLS.map(({ text, icon: Icon, width }) => (
                    <ToolButton key={text} $width={width} $icon={!!Icon}>
                      {Icon && <Icon />}
                      {text}
                    </ToolButton>
                  ))}
                  <DetailToggle>
                    <Check checked={showDetail} onChange={() => setShowDetail(!showDetail)} />
                    显示详情
                  </DetailToggle>
                </ToolGroup>
                <ToolGroup>
                  <ToolButton $width={65} $icon>
                    <RefreshIcon />
                    刷新
                  </ToolButton>
                  <ToolButton $width={66}>查询</ToolButton>
                  <ToolButton $width={69}>导出xls</ToolButton>
                </ToolGroup>
              </Toolbar>

              <Filters>
                <Option $width={72}>
                  <Check />
                  表单充满
                </Option>
                {RANGES.map(({ text, width }) => (
                  <Option key={text} $width={width}>
                    <Radio name="range" checked={range === text} onChange={() => setRange(text)} />
                    {text}
                  </Option>
                ))}
              </Filters>

              <Workspace>
                <Tree>
                  <TreeItem>
                    <svg width="11" height="7" viewBox="0 0 11 7">
                      <path d="M7 0v7H0z" fill="#333" />
                      <path d="M10 3h1v1h-1z" fill="#999" />
                    </svg>
                    全部
                  </TreeItem>
                  <TreeItem $level={1}>
                    <svg width="11" height="18" viewBox="0 0 11 18">
                      <path d="M0.500 4.500l4.500 4.500-4.500 4.500z" fill="#fff" stroke="#999" />
                      <path d="M2 0h1v1H2zM10 9h1v1h-1z" fill="#999" />
                    </svg>
                    可可虎装饰
                  </TreeItem>
                </Tree>

                <GridFrame>
                  <GridView>
                    <CustomerTable selectedId={selectedId} onSelect={setSelectedId} />
                  </GridView>
                  <VScroll>
                    <ScrollArrow aria-label="向上"><Arrow dir="up" /></ScrollArrow>
                    <Gap $grow={368} />
                    <Thumb $grow={394} />
                    <ScrollArrow aria-label="向下"><Arrow dir="down" /></ScrollArrow>
                  </VScroll>
                  <HScroll>
                    <ScrollArrow aria-label="向左"><Arrow dir="left" /></ScrollArrow>
                    <Thumb />
                    <Gap $grow={1} />
                    <ScrollArrow aria-label="向右"><Arrow dir="right" /></ScrollArrow>
                  </HScroll>
                  <Corner />
                  {showDetail && <DetailPanel onClose={() => setShowDetail(false)} />}
                </GridFrame>
              </Workspace>
            </Pane>
          </Content>
        </Body>
      </Window>
    </>
  );
};

export default App;
